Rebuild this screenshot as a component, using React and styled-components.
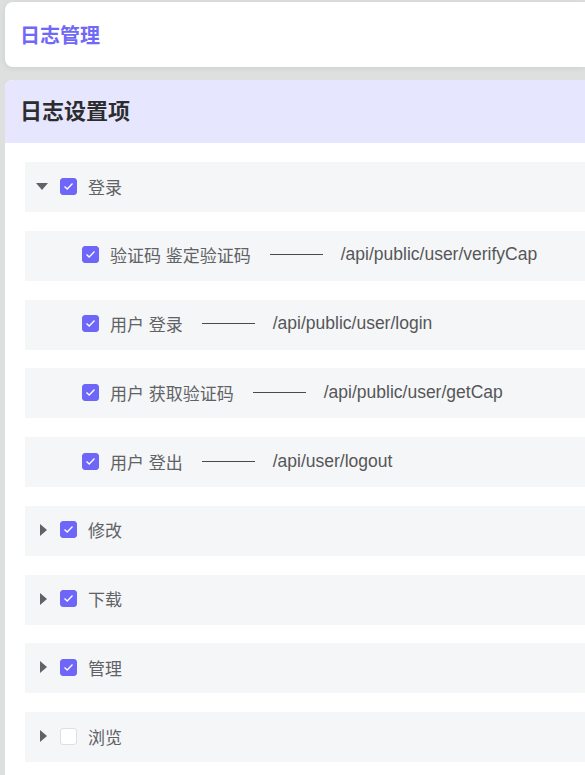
import React from 'react';
import styled, { createGlobalStyle } from 'styled-components';

const GlobalStyle = createGlobalStyle`
  body {
    margin: 0;
    background: #dedfdf;
    font-family: "Liberation Sans", "Noto Sans CJK SC", sans-serif;
  }
`;

const Page = styled.div`
  padding: 2px 0 0 5px;
  height: 775px;
  box-sizing: border-box;
  overflow: hidden;
`;

const TopBar = styled.div`
  height: 65px;
  background: #fff;
  border-radius: 8px 0 0 8px;
  box-shadow: 0 1px 6px rgba(0, 0, 0, 0.08);
  display: flex;
  align-items: center;
  padding-left: 15px;
`;

const TopTitle = styled.h1`
  margin: 0;
  font-size: 20px;
  font-weight: 700;
  color: #7068f6;
`;

const Panel = styled.section`
  margin-top: 13px;
  background: #fff;
  border-radius: 8px 0 0 0;
  overflow: hidden;
`;

const PanelHead = styled.div`
  height: 63px;
  box-sizing: border-box;
  padding: 0 0 5px 15px;
  background: #e6e6ff;
  display: flex;
  align-items: center;
`;

const PanelTitle = styled.h2`
  margin: 0;
  font-size: 22px;
  font-weight: 700;
  color: #2c2c2e;
`;

const PanelBody = styled.div`
  padding: 19px 0 19px 20px;
  display: flex;
  flex-direction: column;
  gap: 18.75px;
`;

const Row = styled.div`
  height: 50px;
  flex-shrink: 0;
  box-sizing: border-box;
  padding-bottom: 2px;
  background: #f5f6f7;
  display: flex;
  align-items: center;
  padding-left: ${p => (p.$child ? 57 : 11)}px;
  font-size: 17px;
  color: #606266;
  white-space: nowrap;
`;

const Caret = styled.span`
  width: 11px;
  height: 11px;
  margin-right: 13px;
  display: flex;
  align-items: center;
  justify-content: center;
  &::before {
    content: '';
    width: 0;
    height: 0;
    ${p =>
      p.$open
        ? `border-left: 6px solid transparent; border-right: 6px solid transparent; border-top: 7px solid #606266;`
        : `border-top: 6px solid transparent; border-bottom: 6px solid transparent; border-left: 7px solid #606266; margin-left: 3px;`}
  }
`;

const Box = styled.span`
  width: 17px;
  height: 17px;
  box-sizing: border-box;
  border-radius: 3px;
  margin-right: 11px;
  display: flex;
  align-items: center;
  justify-content: center;
  background: ${p => (p.$checked ? '#6d66f8' : '#fff')};
  border: 1px solid ${p => (p.$checked ? '#6d66f8' : '#dcdfe6')};
`;

const Dash = styled.span`
  width: 53px;
  border-top: 1px solid #4a4a4a;
  margin: 0 18px 0 19px;
`;

const Url = styled.span`
  font-size: 17.5px;
  color: #555659;
`;

function Check({ checked }) {
  return (
    <Box $checked={checked}>
      {checked && (
        <svg width="11" height="9" viewBox="0 0 11 9">
          <path d="M1.5 4.5 L4.2 7 L9.5 1.5" fill="none" stroke="#fff" strokeWidth="1.3" />
        </svg>
      )}
    </Box>
  );
}

const children = [
  ['验证码 鉴定验证码', '/api/public/user/verifyCap'],
  ['用户 登录', '/api/public/user/login'],
  ['用户 获取验证码', '/api/public/user/getCap'],
  ['用户 登出', '/api/user/logout'],
];

const groups = [
  ['修改', true],
  ['下载', true],
  ['管理', true],
  ['浏览', false],
];

export default function App() {
  return (
    <>
      <GlobalStyle />
      <Page>
        <TopBar>
          <TopTitle>日志管理</TopTitle>
        </TopBar>
        <Panel>
          <PanelHead>
            <PanelTitle>日志设置项</PanelTitle>
          </PanelHead>
          <PanelBody>
            <Row>
              <Caret $open />
              <Check checked />
              <span>登录</span>
            </Row>
            {children.map(([label, url]) => (
              <Row $child key={url}>
                <Check checked />
                <span>{label}</span>
                <Dash />
                <Url>{url}</Url>
              </Row>
            ))}
            {groups.map(([label, checked]) => (
              <Row key={label}>
                <Caret />
                <Check checked={checked} />
                <span>{label}</span>
              </Row>
            ))}
          </PanelBody>
        </Panel>
      </Page>
    </>
  );
}
